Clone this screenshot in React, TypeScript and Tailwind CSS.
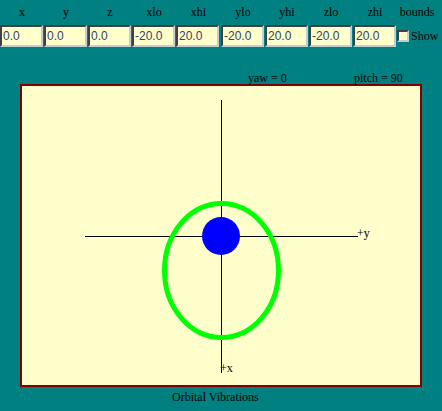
const serif = "font-['Liberation_Serif','Times_New_Roman',serif]"
const sans = "font-['Liberation_Sans',Arial,sans-serif]"

const fields = [
  { label: "x", value: "0.0", w: "w-[44px]" },
  { label: "y", value: "0.0", w: "w-[44px]" },
  { label: "z", value: "0.0", w: "w-[44px]" },
  { label: "xlo", value: "-20.0", w: "w-[44px]" },
  { label: "xhi", value: "20.0", w: "w-[45px]" },
  { label: "ylo", value: "-20.0", w: "w-[44px]" },
  { label: "yhi", value: "20.0", w: "w-[44px]" },
  { label: "zlo", value: "-20.0", w: "w-[44px]" },
  { label: "zhi", value: "20.0", w: "w-[44px]" },
]

function Field({ label, value, w }: { label: string; value: string; w: string }) {
  return (
    <div className={`${w} flex flex-col`}>
      <div className={`h-[25px] pt-[1px] text-center text-[12px] leading-[22px] text-black ${serif}`}>{label}</div>
      <input
        readOnly
        value={value}
        className={`h-[22px] w-[43px] border-2 border-t-[#404040] border-l-[#404040] border-b-[#c4ccd4] border-r-[#c4ccd4] bg-[#ffffcc] pl-[1px] text-[12px] text-[#334466] outline-none ${sans}`}
      />
    </div>
  )
}

function Orbit() {
  return (
    <svg className="block" width="398" height="299" viewBox="22 86 398 299">
      <line x1="221.5" y1="100" x2="221.5" y2="373" stroke="#000" strokeWidth="1" />
      <line x1="85" y1="236.5" x2="358" y2="236.5" stroke="#000" strokeWidth="1" />
      <ellipse cx="221.5" cy="270.5" rx="57" ry="67" fill="none" stroke="#00ff00" strokeWidth="5" />
      <circle cx="221" cy="236" r="19" fill="#0000ff" />
      <text x="357" y="237" fontSize="12" fill="#000" fontFamily="'Liberation Serif', 'Times New Roman', serif">+y</text>
      <text x="220" y="372" fontSize="12" fill="#000" fontFamily="'Liberation Serif', 'Times New Roman', serif">+x</text>
    </svg>
  )
}

export default function App() {
  return (
    <div className="w-[442px] h-[411px] overflow-hidden bg-[#008080]">
      <div className="flex">
        {fields.map((f) => (
          <Field key={f.label} {...f} />
        ))}
        <div className="w-[45px] flex flex-col">
          <div className={`h-[25px] pt-[1px] w-[40px] text-center text-[12px] leading-[22px] text-black ${serif}`}>bounds</div>
          <div className="flex items-center h-[22px]">
            <input
              type="checkbox"
              className="appearance-none m-0 w-[12px] h-[12px] border-2 border-t-[#404040] border-l-[#404040] border-b-[#c4ccd4] border-r-[#c4ccd4] bg-[#ffffcc]"
            />
            <span className={`ml-[2px] text-[12px] leading-[22px] text-black ${serif}`}>Show</span>
          </div>
        </div>
      </div>

      <div className={`flex items-end h-[37px] text-[12px] leading-[12px] text-black ${serif}`}>
        <span className="ml-[248px] w-[106px]">yaw = 0</span>
        <span>pitch = 90</span>
      </div>

      <div className="ml-[20px] w-[402px] h-[303px] border-2 border-[#800000] bg-[#ffffcc] overflow-hidden">
        <Orbit />
      </div>

      <div className={`pl-[172px] pt-[2px] text-[12px] leading-[16px] text-black ${serif}`}>Orbital Vibrations</div>
    </div>
  )
}
